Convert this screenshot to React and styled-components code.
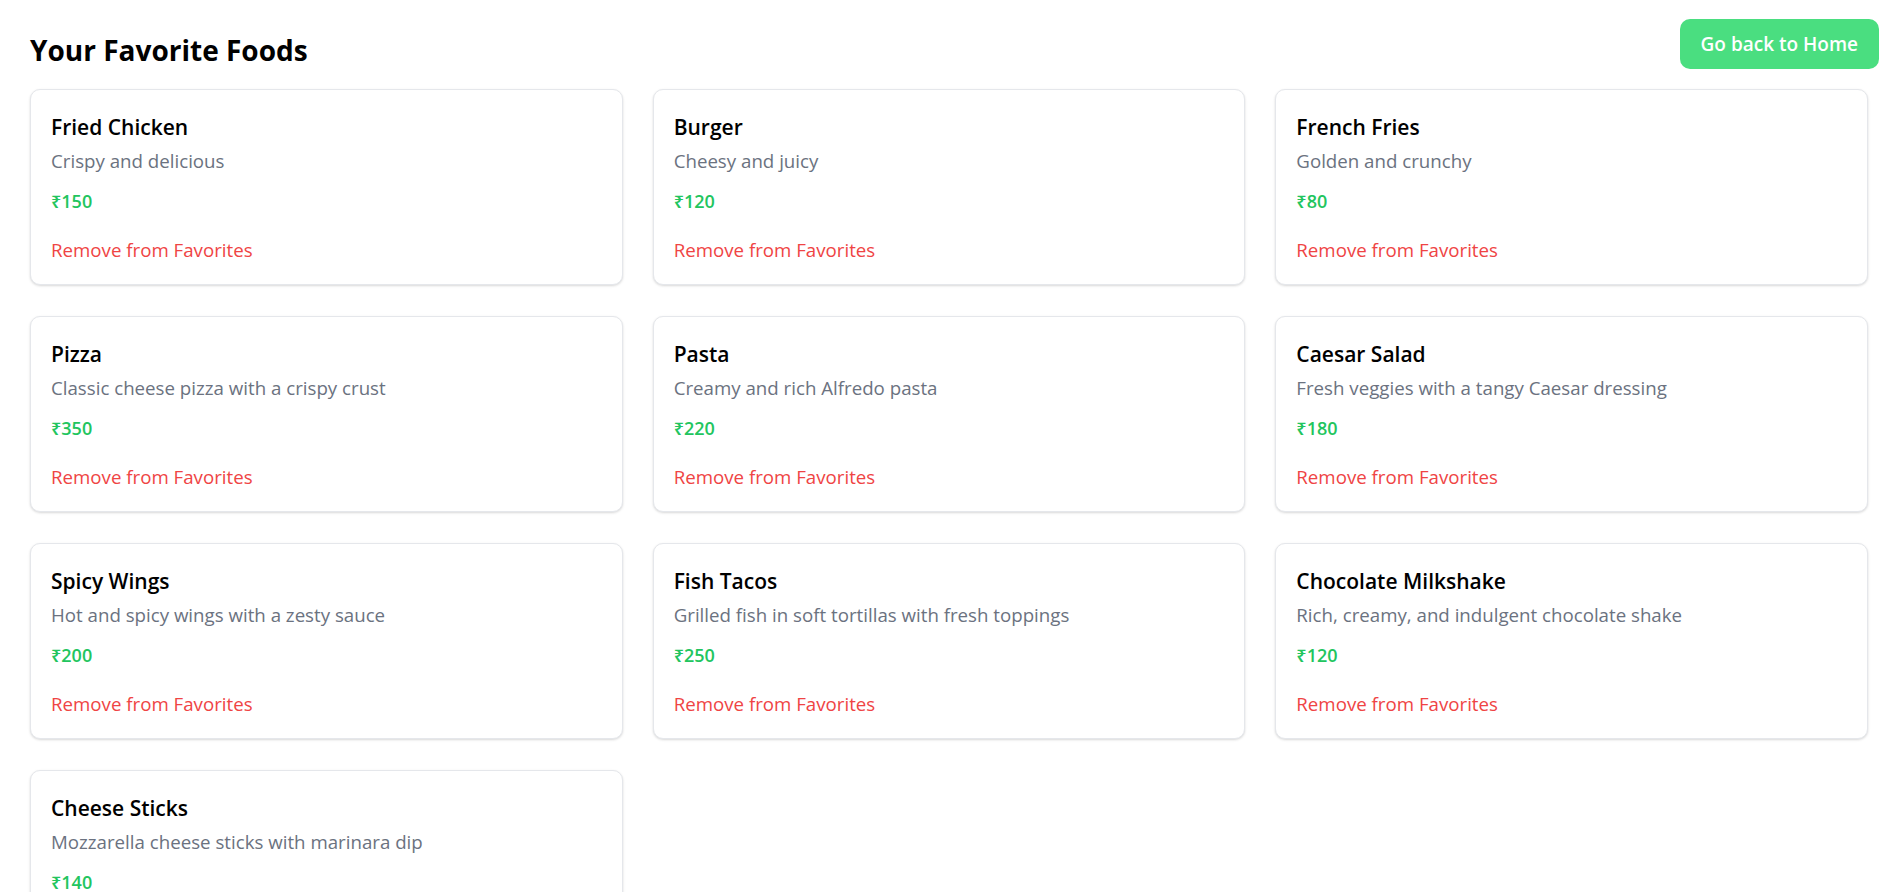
import React from "react";
import styled, { createGlobalStyle } from "styled-components";

const GlobalStyle = createGlobalStyle`
  body {
    margin: 0;
    background: #ffffff;
    font-family: "Open Sans", "Noto Sans", sans-serif;
  }
`;

const foods = [
  { name: "Fried Chicken", desc: "Crispy and delicious", price: 150 },
  { name: "Burger", desc: "Cheesy and juicy", price: 120 },
  { name: "French Fries", desc: "Golden and crunchy", price: 80 },
  { name: "Pizza", desc: "Classic cheese pizza with a crispy crust", price: 350 },
  { name: "Pasta", desc: "Creamy and rich Alfredo pasta", price: 220 },
  { name: "Caesar Salad", desc: "Fresh veggies with a tangy Caesar dressing", price: 180 },
  { name: "Spicy Wings", desc: "Hot and spicy wings with a zesty sauce", price: 200 },
  { name: "Fish Tacos", desc: "Grilled fish in soft tortillas with fresh toppings", price: 250 },
  { name: "Chocolate Milkshake", desc: "Rich, creamy, and indulgent chocolate shake", price: 120 },
  { name: "Cheese Sticks", desc: "Mozzarella cheese sticks with marinara dip", price: 140 },
];

function FoodCard({ food }) {
  return (
    <Card>
      <FoodName>{food.name}</FoodName>
      <FoodDesc>{food.desc}</FoodDesc>
      <Price>₹{food.price}</Price>
      <RemoveButton>Remove from Favorites</RemoveButton>
    </Card>
  );
}

function App() {
  return (
    <Page>
      <GlobalStyle />
      <Header>
        <Title>Your Favorite Foods</Title>
        <HomeButton>Go back to Home</HomeButton>
      </Header>
      <Grid>
        {foods.map((f) => (
          <FoodCard key={f.name} food={f} />
        ))}
      </Grid>
    </Page>
  );
}

const Page = styled.div`
  padding: 19px 29px 32px 30px;
`;

const Header = styled.div`
  display: flex;
  justify-content: space-between;
  align-items: flex-start;
  height: 50px;
  margin-right: -11px;
  margin-bottom: 20px;
`;

const Title = styled.h1`
  margin: 13px 0 0 0;
  font-size: 28px;
  line-height: 36px;
  font-weight: 700;
  color: #000;
`;

const HomeButton = styled.button`
  height: 50px;
  padding: 0 21px;
  border: none;
  border-radius: 10px;
  background: #4ade80;
  color: #fff;
  font-family: inherit;
  font-size: 19px;
  font-weight: 600;
  cursor: pointer;
`;

const Grid = styled.div`
  display: grid;
  grid-template-columns: repeat(3, 1fr);
  gap: 31px 30px;
`;

const Card = styled.div`
  display: flex;
  flex-direction: column;
  align-items: flex-start;
  padding: 23px 20px 22px 20px;
  border: 1px solid #e5e7eb;
  border-radius: 10px;
  background: #fff;
  box-shadow: 0 1px 3px rgba(0, 0, 0, 0.1), 0 1px 2px rgba(0, 0, 0, 0.06);
`;

const FoodName = styled.h2`
  margin: 0 0 8px 0;
  font-size: 21px;
  line-height: 28px;
  font-weight: 600;
  color: #000;
`;

const FoodDesc = styled.p`
  margin: 0;
  font-size: 18.7px;
  line-height: 24px;
  color: #6b7280;
`;

const Price = styled.p`
  margin: 16px 0 0 0;
  font-size: 18px;
  line-height: 24px;
  font-weight: 600;
  color: #22c55e;
`;

const RemoveButton = styled.button`
  margin-top: 25px;
  padding: 0;
  border: none;
  background: none;
  font-family: inherit;
  font-size: 18.7px;
  line-height: 24px;
  color: #ef4444;
  cursor: pointer;
`;

export default App;
